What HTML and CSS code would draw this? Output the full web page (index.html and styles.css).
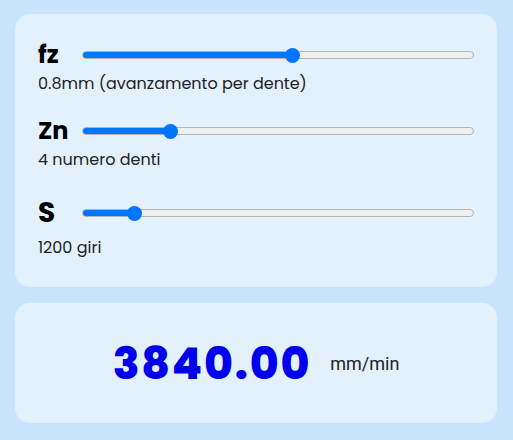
FILE: index.html
```html
<!DOCTYPE html>
<html lang="it">
<head>
<meta charset="utf-8">
<title>Calcolo avanzamento</title>
<link rel="stylesheet" href="styles.css">
</head>
<body>
  <section class="card controls">
    <div class="group">
      <div class="row">
        <span class="label">fz</span>
        <input class="slider" type="range" min="0.1" max="1.4" step="0.1" value="0.8" style="--v:0.522">
      </div>
      <p class="desc">0.8mm (avanzamento per dente)</p>
    </div>
    <div class="group">
      <div class="row">
        <span class="label">Zn</span>
        <input class="slider" type="range" min="1" max="15" step="1" value="4" style="--v:0.215">
      </div>
      <p class="desc">4 numero denti</p>
    </div>
    <div class="group">
      <div class="row row-tall">
        <span class="label label-big">S</span>
        <input class="slider" type="range" min="500" max="6500" step="100" value="1200" style="--v:0.118">
      </div>
      <p class="desc">1200 giri</p>
    </div>
  </section>
  <section class="card result">
    <span class="value">3840.00</span>
    <span class="unit">mm/min</span>
  </section>
</body>
</html>
```
FILE: styles.css
```css
html, body {
  margin: 0;
  background: #c9e4fd;
}
body {
  padding: 14px 16px 0 15px;
  font-family: "Poppins", "Open Sans", "Noto Sans", sans-serif;
  color: #111;
}
.card {
  background: #e3f1fd;
  border-radius: 15px;
}
.controls {
  padding: 23px 23px 28px 23px;
  display: flex;
  flex-direction: column;
  gap: 18px;
}
.row {
  display: flex;
  align-items: center;
  height: 36px;
}
.row-tall {
  height: 48px;
}
.label {
  width: 44px;
  font-size: 24px;
  font-weight: 700;
  line-height: 36px;
  color: #000;
}
.label-big {
  font-size: 28px;
}
.desc {
  margin: 0;
  font-size: 16px;
  line-height: 22px;
  color: #222;
}
.slider {
  -webkit-appearance: none;
  appearance: none;
  flex: 1;
  margin: 0;
  height: 8px;
  border-radius: 4px;
  border: 1px solid #b3b3b3;
  box-sizing: border-box;
  background: linear-gradient(to right, #0075ff calc(7.5px + (100% - 15px) * var(--v)), #efefef calc(7.5px + (100% - 15px) * var(--v)));
}
.slider::-webkit-slider-thumb {
  -webkit-appearance: none;
  appearance: none;
  width: 15px;
  height: 15px;
  border-radius: 50%;
  background: #0075ff;
  border: none;
}
.result {
  margin-top: 16px;
  height: 120px;
  display: flex;
  align-items: center;
  justify-content: center;
  gap: 19px;
}
.value {
  font-size: 44px;
  font-weight: 800;
  letter-spacing: 1.8px;
  color: #0000ee;
  font-family: "Poppins", "Open Sans", sans-serif;
}
.unit {
  font-size: 18px;
  font-family: Roboto, "Liberation Sans", sans-serif;
  color: #222;
}
```
